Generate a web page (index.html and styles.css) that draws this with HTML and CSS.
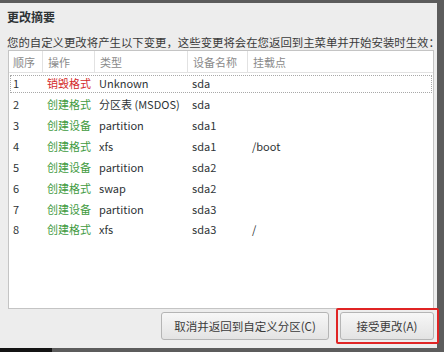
FILE: index.html
```html
<!DOCTYPE html>
<html lang="zh-CN">
<head>
<meta charset="utf-8">
<title>更改摘要</title>
<link rel="stylesheet" href="styles.css">
</head>
<body>
<div class="screen">
  <div class="dialog">
    <div class="title">更改摘要</div>
    <div class="subtitle">您的自定义更改将产生以下变更，这些变更将会在您返回到主菜单并开始安装时生效：</div>
    <div class="table">
      <div class="row head">
        <div class="cell">顺序</div>
        <div class="cell sep">操作</div>
        <div class="cell sep">类型</div>
        <div class="cell sep">设备名称</div>
        <div class="cell sep">挂载点</div>
      </div>
      <div class="row focus">
        <div class="cell">1</div>
        <div class="cell red">销毁格式</div>
        <div class="cell">Unknown</div>
        <div class="cell">sda</div>
        <div class="cell"></div>
      </div>
      <div class="row">
        <div class="cell">2</div>
        <div class="cell green">创建格式</div>
        <div class="cell">分区表 (MSDOS)</div>
        <div class="cell">sda</div>
        <div class="cell"></div>
      </div>
      <div class="row">
        <div class="cell">3</div>
        <div class="cell green">创建设备</div>
        <div class="cell">partition</div>
        <div class="cell">sda1</div>
        <div class="cell"></div>
      </div>
      <div class="row">
        <div class="cell">4</div>
        <div class="cell green">创建格式</div>
        <div class="cell">xfs</div>
        <div class="cell">sda1</div>
        <div class="cell">/boot</div>
      </div>
      <div class="row">
        <div class="cell">5</div>
        <div class="cell green">创建设备</div>
        <div class="cell">partition</div>
        <div class="cell">sda2</div>
        <div class="cell"></div>
      </div>
      <div class="row">
        <div class="cell">6</div>
        <div class="cell green">创建格式</div>
        <div class="cell">swap</div>
        <div class="cell">sda2</div>
        <div class="cell"></div>
      </div>
      <div class="row">
        <div class="cell">7</div>
        <div class="cell green">创建设备</div>
        <div class="cell">partition</div>
        <div class="cell">sda3</div>
        <div class="cell"></div>
      </div>
      <div class="row">
        <div class="cell">8</div>
        <div class="cell green">创建格式</div>
        <div class="cell">xfs</div>
        <div class="cell">sda3</div>
        <div class="cell">/</div>
      </div>
    </div>
    <div class="buttons">
      <button class="btn cancel">取消并返回到自定义分区(C)</button>
      <button class="btn accept">接受更改(A)<span class="highlight"></span></button>
    </div>
  </div>
  <div class="taskbar"></div>
</div>
</body>
</html>
```
FILE: styles.css
```css
html, body {
  margin: 0;
  padding: 0;
}
body {
  width: 444px;
  height: 352px;
  overflow: hidden;
  background: #5c5c5c;
  font-family: "Noto Sans CJK SC", "Noto Sans", sans-serif;
  color: #2e3436;
}
.screen {
  padding-top: 3px;
}
.dialog {
  width: 437px;
  height: 345px;
  box-sizing: border-box;
  background: #ededed;
  padding: 6px 3px 0 8px;
  display: flex;
  flex-direction: column;
}
.title {
  font-size: 12px;
  font-weight: bold;
  line-height: 16px;
  height: 16px;
  margin-left: -1px;
}
.subtitle {
  font-size: 11.4px;
  line-height: 16px;
  margin-top: 9px;
  margin-left: -1px;
  white-space: nowrap;
  color: #3a3a3a;
}
.table {
  height: 259px;
  box-sizing: border-box;
  background: #fff;
  border: 1px solid #c4c4c4;
  font-size: 11px;
}
.row {
  display: grid;
  grid-template-columns: 33px 52px 93px 60px 1fr;
  height: 20.86px;
  align-items: center;
  position: relative;
}
.row.head {
  height: 21px;
  border-bottom: 1px solid #e2e2e2;
  color: #8a8a8a;
  align-items: stretch;
}
.row.head .cell {
  display: flex;
  align-items: center;
}
.cell {
  padding-left: 4px;
  white-space: nowrap;
  line-height: 16px;
}
.cell + .cell {
  padding-left: 5px;
}
.cell.sep {
  border-left: 1px solid #e2e2e2;
  padding-left: 5px;
}
.row.focus::after {
  content: "";
  position: absolute;
  left: 1px;
  right: 1px;
  top: 2px;
  bottom: 1px;
  border: 1px dotted #a8a8a8;
}
.red {
  color: #d42a2a;
}
.green {
  color: #3f9b3f;
}
.buttons {
  display: flex;
  justify-content: flex-end;
  gap: 11px;
  margin-top: 3px;
}
.btn {
  height: 28px;
  box-sizing: border-box;
  border: 1px solid #b5b5b5;
  border-radius: 3px;
  background: linear-gradient(#f7f7f7, #e3e3e3);
  font-family: "Noto Sans CJK SC", "Noto Sans", sans-serif;
  font-size: 11.5px;
  color: #3a3a3a;
  padding: 0;
  position: relative;
}
.cancel {
  width: 168px;
}
.accept {
  width: 94px;
}
.highlight {
  position: absolute;
  left: -5px;
  top: -5px;
  right: -6px;
  bottom: -5px;
  border: 2px solid #e02424;
  border-radius: 2px;
}
.taskbar {
  width: 52px;
  height: 4px;
  background: #141414;
}
```
